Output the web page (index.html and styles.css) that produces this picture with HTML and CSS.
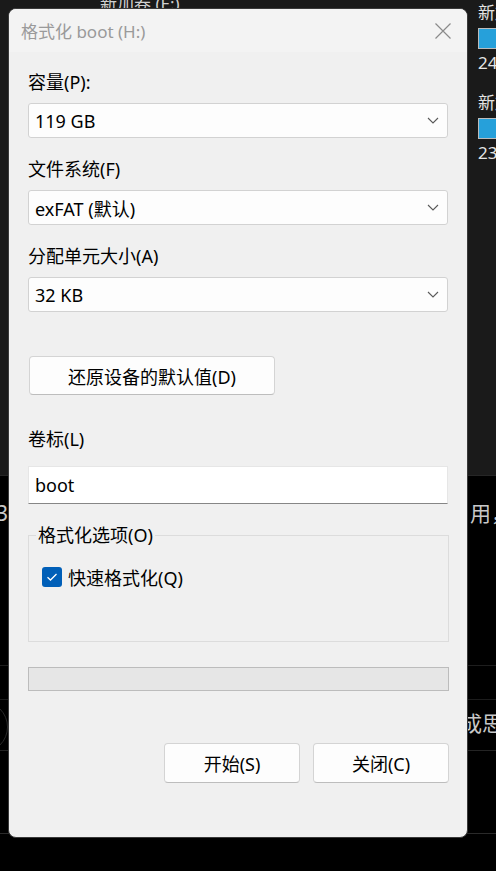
FILE: index.html
```html
<!DOCTYPE html>
<html lang="zh-CN">
<head>
<meta charset="utf-8">
<title>格式化 boot (H:)</title>
<link rel="stylesheet" href="styles.css">
</head>
<body>
<div class="app">
  <div class="app-top">
    <div class="crumb">新加卷 (E:)</div>
    <div class="drives">
      <div class="drive">
        <div class="dname">新加卷 (F:)</div>
        <div class="dbar"></div>
        <div class="dsize">24.3 GB 可用</div>
      </div>
      <div class="drive">
        <div class="dname">新加卷 (G:)</div>
        <div class="dbar"></div>
        <div class="dsize">23.1 GB 可用</div>
      </div>
    </div>
  </div>
  <div class="app-bottom">
    <div class="para"><span class="para-left">3</span><span class="para-right">用，</span></div>
    <div class="row-line first"></div>
    <div class="row-item"><span class="avatar"></span><span class="row-text">成思</span></div>
    <div class="row-item empty"></div>
  </div>
</div>

<div class="dialog">
  <div class="titlebar">
    <span class="title">格式化 boot (H:)</span>
    <svg class="close" width="16" height="16" viewBox="0 0 16 16"><path d="M0.5 0.5 L15.5 15.5 M15.5 0.5 L0.5 15.5" stroke="#8a8a8a" stroke-width="1.2" fill="none"/></svg>
  </div>
  <div class="content">
    <div class="label">容量(P):</div>
    <div class="select"><span>119 GB</span><svg width="12" height="7" viewBox="0 0 12 7"><path d="M1 1 L6 6 L11 1" stroke="#5a5a5a" stroke-width="1.1" fill="none"/></svg></div>

    <div class="label gap">文件系统(F)</div>
    <div class="select"><span>exFAT (默认)</span><svg width="12" height="7" viewBox="0 0 12 7"><path d="M1 1 L6 6 L11 1" stroke="#5a5a5a" stroke-width="1.1" fill="none"/></svg></div>

    <div class="label gap">分配单元大小(A)</div>
    <div class="select"><span>32 KB</span><svg width="12" height="7" viewBox="0 0 12 7"><path d="M1 1 L6 6 L11 1" stroke="#5a5a5a" stroke-width="1.1" fill="none"/></svg></div>

    <button class="btn reset">还原设备的默认值(D)</button>

    <div class="label vol">卷标(L)</div>
    <div class="textbox">boot</div>

    <fieldset class="group">
      <legend>格式化选项(O)</legend>
      <div class="check-row">
        <span class="checkbox"><svg width="12" height="10" viewBox="0 0 12 10"><path d="M1.5 5.2 L4.5 8 L10.5 2" stroke="#fff" stroke-width="1.3" fill="none"/></svg></span>
        <span>快速格式化(Q)</span>
      </div>
    </fieldset>

    <div class="progress"></div>

    <div class="actions">
      <button class="btn action">开始(S)</button>
      <button class="btn action">关闭(C)</button>
    </div>
  </div>
</div>
</body>
</html>
```
FILE: styles.css
```css
* { box-sizing: border-box; }
html, body { margin: 0; padding: 0; }
body {
  width: 496px;
  height: 871px;
  overflow: hidden;
  position: relative;
  background: #000;
  font-family: "Noto Sans", "Noto Sans CJK SC", sans-serif;
}

/* background application */
.app {
  display: grid;
  grid-template-rows: 475px 396px;
  height: 871px;
}
.app-top {
  background: #1a1a1a;
  display: flex;
  justify-content: space-between;
  overflow: hidden;
}
.crumb {
  margin: -7px 0 0 100px;
  color: #d0d0d0;
  font-size: 17px;
  line-height: 22px;
  white-space: nowrap;
}
.drives {
  width: 18px;
  padding-top: 2px;
  display: flex;
  flex-direction: column;
  gap: 18px;
}
.drive {
  display: flex;
  flex-direction: column;
  width: 180px;
  white-space: nowrap;
  color: #e4e4e4;
  font-size: 17px;
  line-height: 22px;
}
.dbar {
  margin: 4px 0 3px;
  height: 21px;
  background: #26a0da;
  border: 1px solid #bcbcbc;
}
.app-bottom {
  background: #000;
  border-top: 1px solid #262626;
  display: flex;
  flex-direction: column;
  color: #c8c8c8;
}
.para {
  margin-top: 22px;
  display: flex;
  justify-content: space-between;
  font-size: 21px;
  line-height: 30px;
  white-space: nowrap;
}
.para-left { margin-left: -4px; }
.para-right { margin-right: -16px; }
.row-line { border-top: 1px solid #1e1e1e; }
.row-line.first { margin-top: 137px; }
.row-item {
  height: 51px;
  display: flex;
  justify-content: space-between;
  align-items: flex-start;
  padding-top: 8px;
  border-top: 1px solid #1c1c1c;
  margin-top: 33px;
}
.row-item.empty {
  margin-top: 0;
  height: 84px;
  border-top-color: #242424;
  border-bottom: 1px solid #2a2a2a;
}
.avatar {
  width: 52px;
  height: 52px;
  margin: -7px 0 0 -44px;
  border: 1px solid #2a2a2a;
  border-radius: 50%;
}
.row-text {
  font-size: 21px;
  line-height: 30px;
  margin-right: -7px;
  white-space: nowrap;
}

/* dialog */
.dialog {
  position: absolute;
  left: 8px;
  top: 8px;
  width: 460px;
  height: 830px;
  border: 1px solid #3a3a3a;
  border-radius: 8px;
  background: #f0f0f0;
  overflow: hidden;
  display: flex;
  flex-direction: column;
}
.titlebar {
  height: 43px;
  flex: none;
  background: #f3f3f3;
  display: flex;
  align-items: center;
  justify-content: space-between;
  padding: 0 16px 0 12px;
}
.title {
  font-size: 17px;
  color: #9a9a9a;
}
.content {
  padding: 18px 19px 0 19px;
  display: flex;
  flex-direction: column;
  font-size: 18px;
  color: #000;
}
.label {
  font-size: 18px;
  line-height: 24px;
}
.label.gap { margin-top: 19px; }
.label.vol { margin-top: 32px; }
.select {
  margin-top: 9px;
  height: 35px;
  background: #fdfdfd;
  border: 1px solid #d2d2d2;
  border-radius: 3px;
  display: flex;
  align-items: center;
  justify-content: space-between;
  padding: 0 8px 0 6px;
  font-size: 18px;
}
.btn {
  font-family: inherit;
  font-size: 18px;
  color: #000;
  background: #fdfdfd;
  border: 1px solid #d4d4d4;
  border-bottom-color: #bdbdbd;
  border-radius: 4px;
  padding: 0;
}
.reset {
  margin: 44px 0 0 1px;
  width: 246px;
  height: 39px;
}
.textbox {
  margin-top: 15px;
  height: 38px;
  background: #fff;
  border: 1px solid #e6e6e6;
  border-bottom: 1px solid #868686;
  padding: 0 6px;
  display: flex;
  align-items: center;
  font-size: 18px;
}
.group {
  margin: 19px 0 0;
  height: 119px;
  border: 1px solid #dcdcdc;
  padding: 20px 0 0 13px;
  min-width: 0;
  width: 421px;
}
.group legend {
  padding: 0 2px;
  margin-left: -6px;
  font-size: 18px;
  line-height: 24px;
}
.check-row {
  display: flex;
  align-items: center;
  gap: 6px;
  height: 20px;
  font-size: 18px;
}
.checkbox {
  width: 20px;
  height: 20px;
  border-radius: 3px;
  background: #005fb8;
  display: flex;
  align-items: center;
  justify-content: center;
}
.progress {
  margin-top: 25px;
  width: 421px;
  height: 24px;
  background: #e6e6e6;
  border: 1px solid #bcbcbc;
}
.actions {
  margin-top: 52px;
  width: 421px;
  display: flex;
  justify-content: flex-end;
  gap: 13px;
}
.action {
  width: 136px;
  height: 40px;
}
```
